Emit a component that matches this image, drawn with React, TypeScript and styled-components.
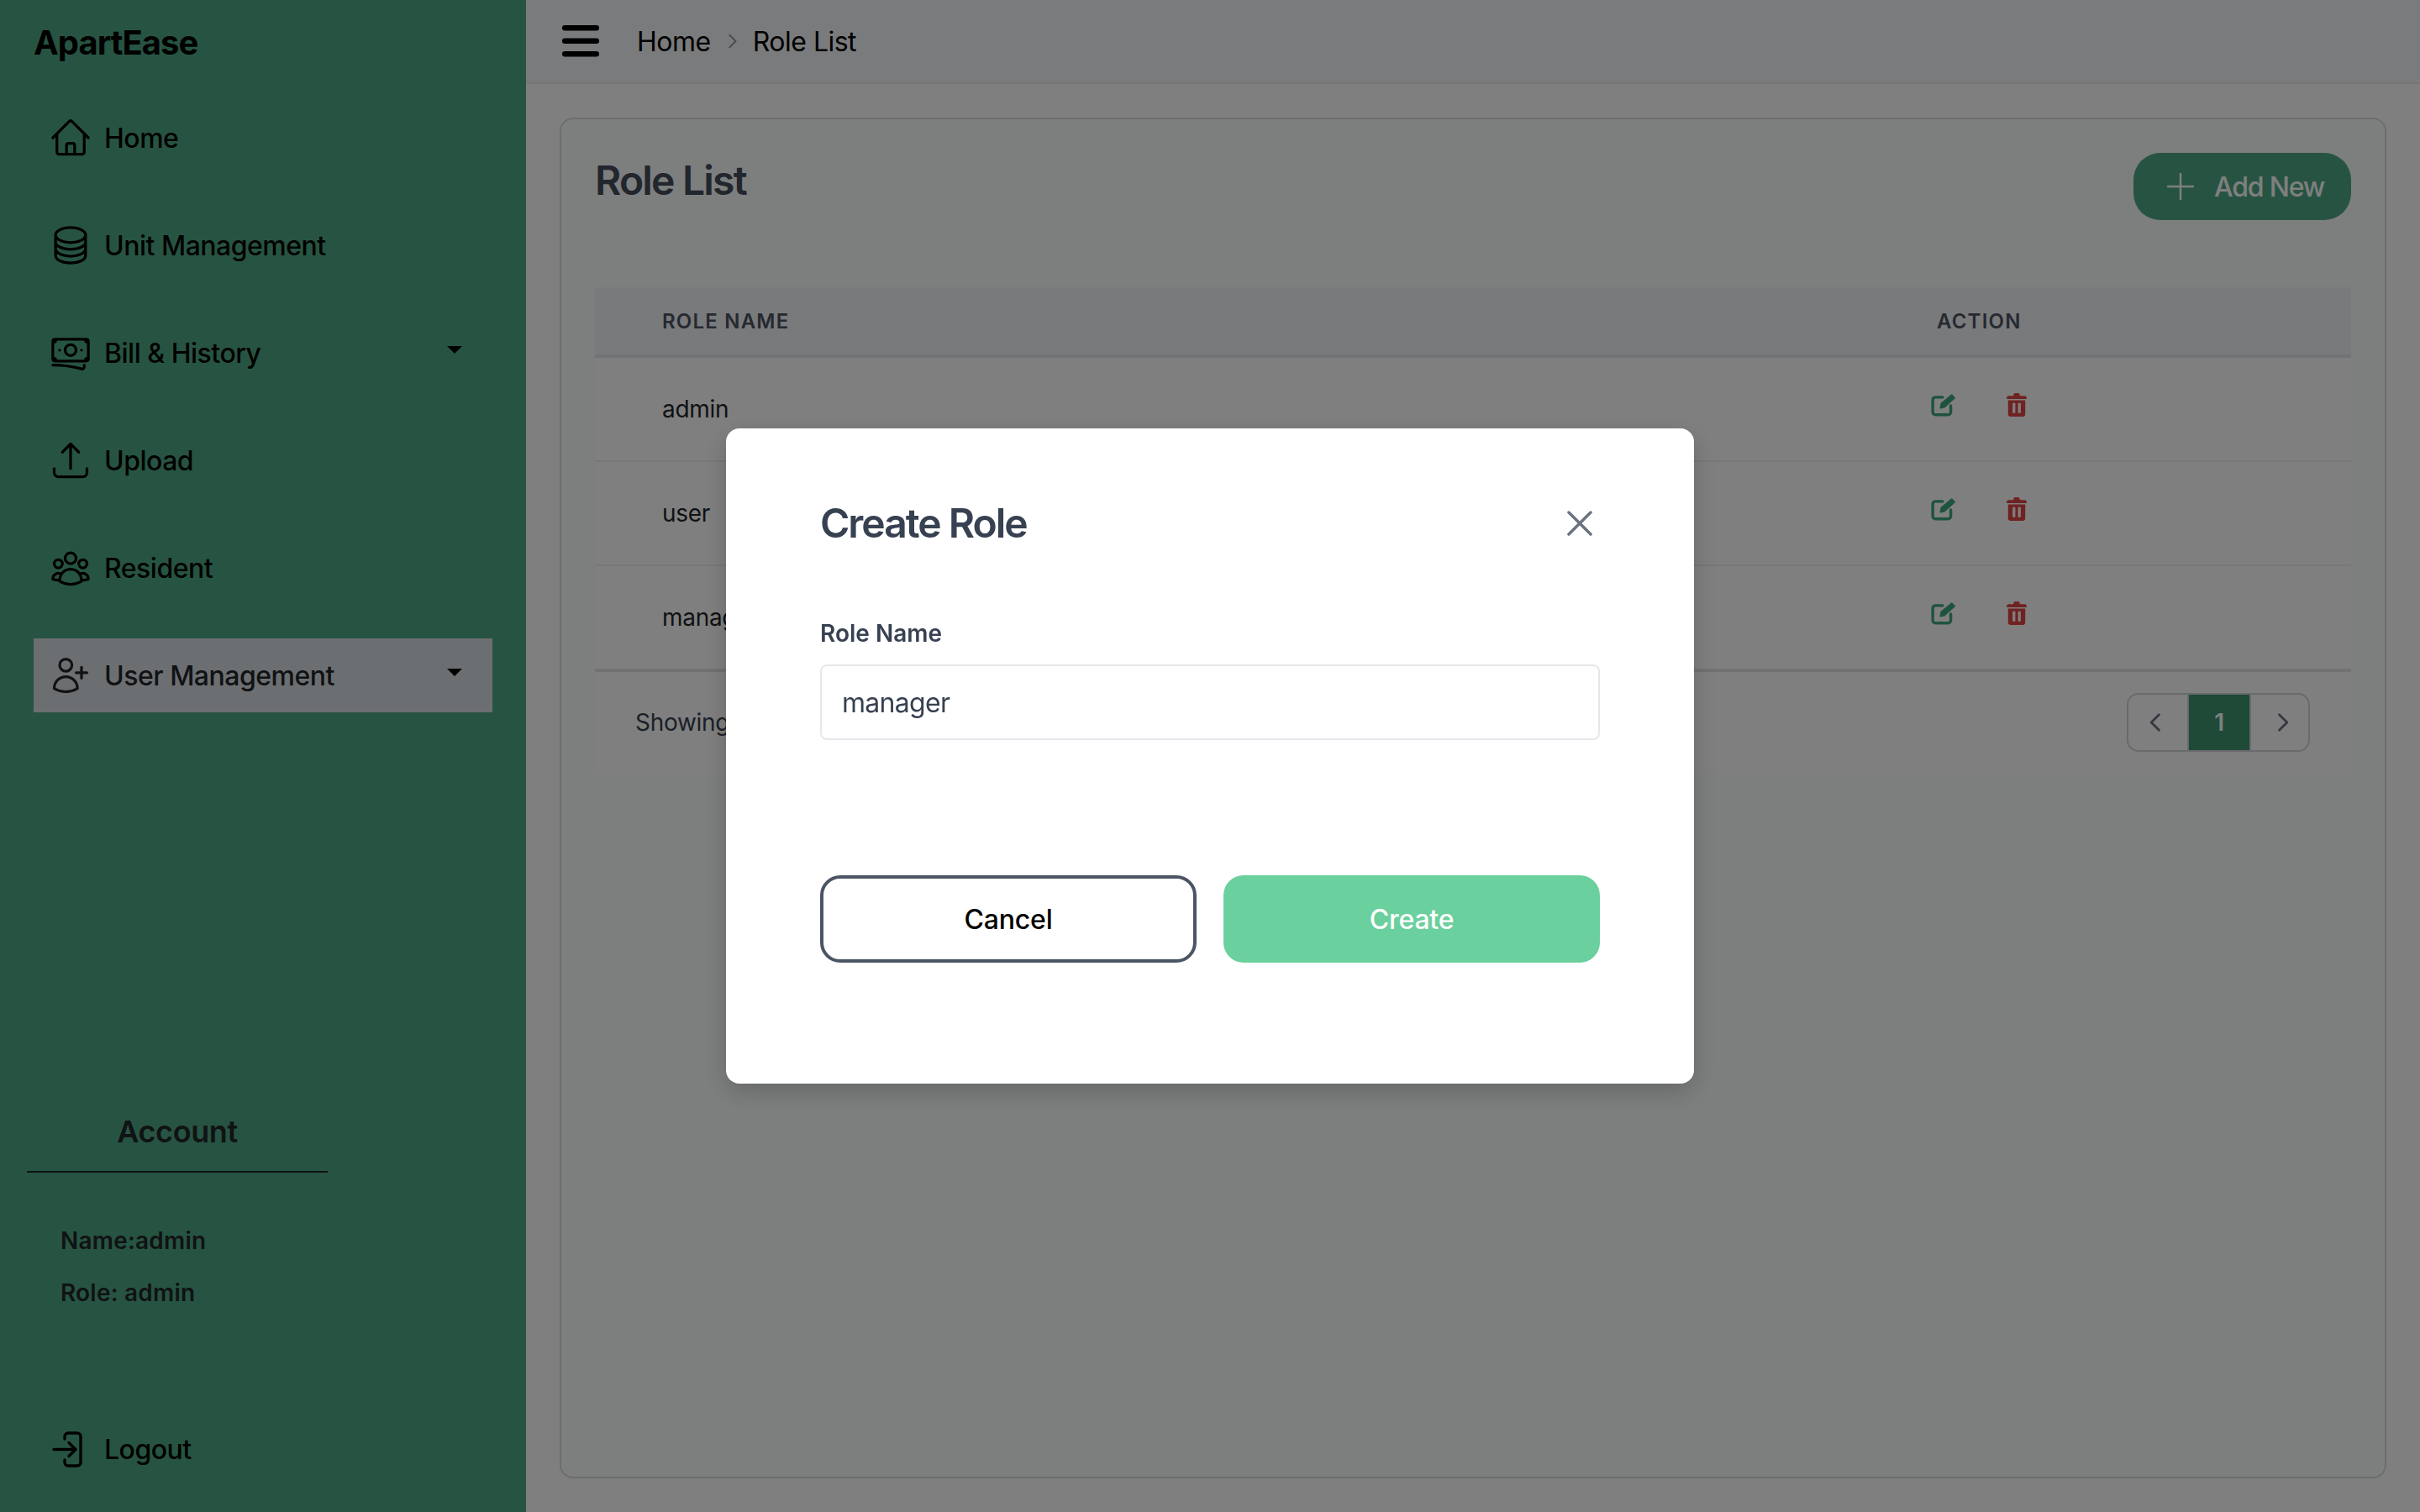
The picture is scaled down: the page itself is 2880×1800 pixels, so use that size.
import styled, { createGlobalStyle } from 'styled-components';
import {
  HiOutlineArrowUpTray,
  HiOutlineBanknotes,
  HiOutlineCircleStack,
  HiOutlineHome,
  HiOutlineUserGroup,
  HiOutlineUserPlus,
} from 'react-icons/hi2';

const GlobalStyle = createGlobalStyle`
  * { box-sizing: border-box; }
  html, body { margin: 0; padding: 0; }
  body {
    font-family: Inter, "Noto Sans", sans-serif;
    color: #212529;
    background: #ffffff;
  }
`;

const Shell = styled.div`
  display: grid;
  grid-template-columns: 626px 1fr;
  height: 1800px;
  overflow: hidden;
`;

const Sidebar = styled.aside`
  display: flex;
  flex-direction: column;
  background: #4ea985;
  padding: 0 40px 31px;
`;

const Brand = styled.div`
  height: 100px;
  display: flex;
  align-items: center;
  font-size: 40px;
  font-weight: 700;
  letter-spacing: -1px;
  color: #000;
`;

const Nav = styled.nav`
  display: flex;
  flex-direction: column;
  gap: 40px;
  margin-top: 20px;
`;

const NavItem = styled.div<{ $active?: boolean }>`
  display: flex;
  align-items: center;
  gap: 14px;
  height: 88px;
  padding: 0 36px 0 18px;
  font-size: 32px;
  font-weight: 500;
  letter-spacing: -0.5px;
  color: ${({ $active }) => ($active ? '#212529' : '#000')};
  background: ${({ $active }) => ($active ? '#d9dee2' : 'transparent')};

  svg {
    flex: none;
  }
`;

const Caret = styled.span`
  margin-left: auto;
  margin-top: -8px;
  border-top: 9px solid #000;
  border-left: 9.5px solid transparent;
  border-right: 9.5px solid transparent;
`;

const Account = styled.section`
  margin: auto 0 0 -8px;
`;

const AccountHeading = styled.h3`
  width: 358px;
  margin: 0;
  padding-bottom: 25px;
  border-bottom: 2px solid #212529;
  text-align: center;
  font-size: 36px;
  line-height: 44px;
  font-weight: 600;
  letter-spacing: -0.4px;
`;

const AccountLine = styled.p`
  margin: 28px 0 0 40px;
  font-size: 28px;
  line-height: 34px;
  font-weight: 600;
  letter-spacing: 0.2px;

  &:first-of-type {
    margin-top: 64px;
  }
`;

const LogoutItem = styled(NavItem)`
  margin-top: 125px;
`;

const Main = styled.main`
  display: flex;
  flex-direction: column;
  background: #fefffe;
  min-width: 0;
`;

const Topbar = styled.header`
  display: flex;
  align-items: center;
  height: 100px;
  padding-left: 43px;
  background: #f5f6f9;
  border-bottom: 2px solid #ebedef;
`;

const Crumbs = styled.div`
  display: flex;
  align-items: center;
  margin-left: 45px;
  font-size: 32px;
  letter-spacing: -0.5px;
  color: #000;
`;

const CrumbSep = styled.span`
  display: flex;
  margin: 0 14px;
  color: #8e9298;
`;

const Card = styled.div`
  flex: 1;
  margin: 40px;
  padding: 40px;
  background: #fafdfc;
  border: 2px solid #d8dbe0;
  border-radius: 16px;
`;

const CardHead = styled.div`
  display: flex;
  justify-content: space-between;
  align-items: flex-start;
  margin-bottom: 80px;
`;

const PageTitle = styled.h1`
  margin: 0;
  font-size: 48px;
  line-height: 66px;
  font-weight: 600;
  letter-spacing: -1.8px;
  color: #444d5b;
`;

const AddButton = styled.button`
  display: flex;
  align-items: center;
  gap: 24px;
  width: 259px;
  height: 80px;
  padding: 0 0 0 40px;
  border: 0;
  border-radius: 32px;
  background: #4ea985;
  color: #fff;
  font: 500 32px Inter, sans-serif;
  letter-spacing: -1.2px;
`;

const Table = styled.div`
  background: #fff;
`;

const TableRow = styled.div<{ $last?: boolean }>`
  display: grid;
  grid-template-columns: 1517px 1fr;
  height: ${({ $last }) => ($last ? '126px' : '124px')};
  border-bottom: ${({ $last }) => ($last ? '4px solid #e2e4e8' : '2px solid #eceef0')};
`;

const TableHead = styled.div`
  display: grid;
  grid-template-columns: 1517px 1fr;
  align-items: center;
  height: 84px;
  background: #f3f4f6;
  border-bottom: 4px solid #e5e7eb;
`;

const HeadCell = styled.div`
  padding-left: 80px;
  font-size: 24px;
  font-weight: 600;
  letter-spacing: 1.2px;
  color: #4b5563;
`;

const NameCell = styled.div`
  padding: 43px 0 0 80px;
  font-size: 28px;
  line-height: 36px;
  letter-spacing: -0.3px;
  color: #212529;
`;

const ActionCell = styled.div`
  display: flex;
  align-items: flex-start;
  gap: 60px;
  padding: 42px 0 0 73px;
`;

const TableFoot = styled.div`
  display: flex;
  align-items: center;
  justify-content: space-between;
  height: 120px;
  padding: 0 49px 0 48px;
  font-size: 28px;
  letter-spacing: -0.3px;
  color: #374151;
`;

const Pager = styled.div`
  display: flex;
  height: 70px;
  border: 2px solid #d1d5db;
  border-radius: 14px;
  overflow: hidden;
`;

const PageArrow = styled.div<{ $side: 'left' | 'right' }>`
  display: flex;
  align-items: center;
  justify-content: center;
  width: ${({ $side }) => ($side === 'left' ? '70px' : '68px')};
  padding: ${({ $side }) => ($side === 'left' ? '0 4px 0 0' : '0 0 0 6px')};
  color: #6b7280;
`;

const PageCurrent = styled.div`
  display: flex;
  align-items: center;
  justify-content: center;
  width: 76px;
  background: #3e9570;
  border-left: 2px solid #d1d5db;
  border-right: 2px solid #d1d5db;
  color: #fff;
  font-size: 28px;
  font-weight: 600;
`;

const Backdrop = styled.div`
  position: fixed;
  inset: 0;
  display: flex;
  align-items: center;
  justify-content: center;
  background: rgba(0, 0, 0, 0.5);
`;

const Modal = styled.div`
  width: 1152px;
  height: 780px;
  padding: 80px 112px 0;
  background: #fff;
  border-radius: 16px;
  box-shadow: 0 10px 30px rgba(0, 0, 0, 0.18);
`;

const ModalHead = styled.div`
  display: flex;
  align-items: center;
  justify-content: space-between;
  height: 66px;
  padding-right: 9px;
  margin-bottom: 80px;
`;

const ModalTitle = styled.h2`
  margin: 0;
  font-size: 48px;
  line-height: 66px;
  font-weight: 600;
  letter-spacing: -2px;
  color: #374151;
`;

const FieldLabel = styled.label`
  display: block;
  margin-bottom: 19px;
  font-size: 28px;
  line-height: 36px;
  font-weight: 600;
  color: #374151;
`;

const TextInput = styled.input`
  display: block;
  width: 100%;
  height: 90px;
  padding: 0 24px;
  border: 2px solid #e5e7eb;
  border-radius: 8px;
  outline: none;
  font: 400 32px Inter, sans-serif;
  letter-spacing: -0.7px;
  color: #374151;
`;

const ModalActions = styled.div`
  display: grid;
  grid-template-columns: 1fr 1fr;
  gap: 32px;
  margin-top: 161px;
`;

const ModalButton = styled.button<{ $primary?: boolean }>`
  height: 104px;
  border: ${({ $primary }) => ($primary ? '0' : '4px solid #4b5563')};
  border-radius: 24px;
  background: ${({ $primary }) => ($primary ? '#6ad09d' : '#fff')};
  color: ${({ $primary }) => ($primary ? '#fff' : '#000')};
  font: 500 32px Inter, sans-serif;
  letter-spacing: -0.2px;
`;

const HamburgerIcon = () => (
  <svg width="44" height="38" viewBox="0 0 44 38" fill="#000">
    <rect x="0" y="0" width="44" height="6.500" rx="3.200" />
    <rect x="0" y="15.500" width="44" height="6.500" rx="3.200" />
    <rect x="0" y="31" width="44" height="6.500" rx="3.200" />
  </svg>
);

const LogoutIcon = () => (
  <svg width="52" height="52" viewBox="0 0 52 52" fill="none" stroke="#000" strokeWidth="3.4" strokeLinecap="round" strokeLinejoin="round">
    <path d="M19 14V11a4 4 0 0 1 4-4h11a4 4 0 0 1 4 4v31a4 4 0 0 1-4 4H23a4 4 0 0 1-4-4v-3" />
    <path d="M6 26.500h26M24 18.500l8 8-8 8" />
  </svg>
);

const ChevronIcon = ({ dir, size, weight }: { dir: 'left' | 'right'; size: number; weight: number }) => (
  <svg width={size} height={size} viewBox="0 0 24 24" fill="none" stroke="currentColor" strokeWidth={weight} strokeLinecap="round" strokeLinejoin="round">
    <path d={dir === 'left' ? 'M15 4l-8 8 8 8' : 'M9 4l8 8-8 8'} />
  </svg>
);

const PlusIcon = () => (
  <svg width="32" height="32" viewBox="0 0 32 32" stroke="#fff" strokeWidth="2.500" strokeLinecap="round">
    <path d="M16 1v30M1 16h30" />
  </svg>
);

const CloseIcon = () => (
  <svg width="30" height="30" viewBox="0 0 30 30" stroke="#6b7280" strokeWidth="3.5" strokeLinecap="round">
    <path d="M2 2l26 26M28 2L2 28" />
  </svg>
);

const EditIcon = () => (
  <svg width="30" height="28" viewBox="0 0 28 26" fill="none" stroke="#3fa67d">
    <path d="M13 4.500H5a3 3 0 0 0-3 3V21a3 3 0 0 0 3 3h14a3 3 0 0 0 3-3v-7" strokeWidth="3.200" strokeLinecap="round" />
    <path d="M10.500 16.500l1-5L23 1.800l3.300 3.400L15 15.500z" fill="#3fa67d" strokeWidth="1.500" strokeLinejoin="round" />
  </svg>
);

const TrashIcon = () => (
  <svg width="24" height="28" viewBox="0 0 22 26" fill="#e04444">
    <path
      fillRule="evenodd"
      d="M7.500 2a2 2 0 0 1 2-2h3a2 2 0 0 1 2 2v1H20a2 2 0 0 1 2 2v1.500H0V5a2 2 0 0 1 2-2h5.500zM1.500 8h19v15a3 3 0 0 1-3 3h-13a3 3 0 0 1-3-3zM6.500 11v11h3V11zM12.500 11v11h3V11z"
    />
  </svg>
);

const navItems = [
  { label: 'Home', icon: HiOutlineHome },
  { label: 'Unit Management', icon: HiOutlineCircleStack },
  { label: 'Bill & History', icon: HiOutlineBanknotes, caret: true },
  { label: 'Upload', icon: HiOutlineArrowUpTray },
  { label: 'Resident', icon: HiOutlineUserGroup },
  { label: 'User Management', icon: HiOutlineUserPlus, caret: true, active: true },
];

const roles = ['admin', 'user', 'manager'];

export default function App() {
  return (
    <>
      <GlobalStyle />
      <Shell>
        <Sidebar>
          <Brand>ApartEase</Brand>
          <Nav>
            {navItems.map(({ label, icon: Icon, caret, active }) => (
              <NavItem key={label} $active={active}>
                <Icon size={52} />
                {label}
                {caret ? <Caret /> : null}
              </NavItem>
            ))}
          </Nav>
          <Account>
            <AccountHeading>Account</AccountHeading>
            <AccountLine>Name:admin</AccountLine>
            <AccountLine>Role: admin</AccountLine>
          </Account>
          <LogoutItem>
            <LogoutIcon />
            Logout
          </LogoutItem>
        </Sidebar>
        <Main>
          <Topbar>
            <HamburgerIcon />
            <Crumbs>
              Home
              <CrumbSep>
                <ChevronIcon dir="right" size={22} weight={2} />
              </CrumbSep>
              Role List
            </Crumbs>
          </Topbar>
          <Card>
            <CardHead>
              <PageTitle>Role List</PageTitle>
              <AddButton>
                <PlusIcon />
                Add New
              </AddButton>
            </CardHead>
            <Table>
              <TableHead>
                <HeadCell>ROLE NAME</HeadCell>
                <HeadCell>ACTION</HeadCell>
              </TableHead>
              {roles.map((role, i) => (
                <TableRow key={role} $last={i === roles.length - 1}>
                  <NameCell>{role}</NameCell>
                  <ActionCell>
                    <EditIcon />
                    <TrashIcon />
                  </ActionCell>
                </TableRow>
              ))}
              <TableFoot>
                <span>Showing 1 to 3 of 3 entries</span>
                <Pager>
                  <PageArrow $side="left">
                    <ChevronIcon dir="left" size={28} weight={2.4} />
                  </PageArrow>
                  <PageCurrent>1</PageCurrent>
                  <PageArrow $side="right">
                    <ChevronIcon dir="right" size={28} weight={2.4} />
                  </PageArrow>
                </Pager>
              </TableFoot>
            </Table>
          </Card>
        </Main>
      </Shell>
      <Backdrop>
        <Modal>
          <ModalHead>
            <ModalTitle>Create Role</ModalTitle>
            <CloseIcon />
          </ModalHead>
          <FieldLabel htmlFor="role-name">Role Name</FieldLabel>
          <TextInput id="role-name" defaultValue="manager" readOnly />
          <ModalActions>
            <ModalButton>Cancel</ModalButton>
            <ModalButton $primary>Create</ModalButton>
          </ModalActions>
        </Modal>
      </Backdrop>
    </>
  );
}
